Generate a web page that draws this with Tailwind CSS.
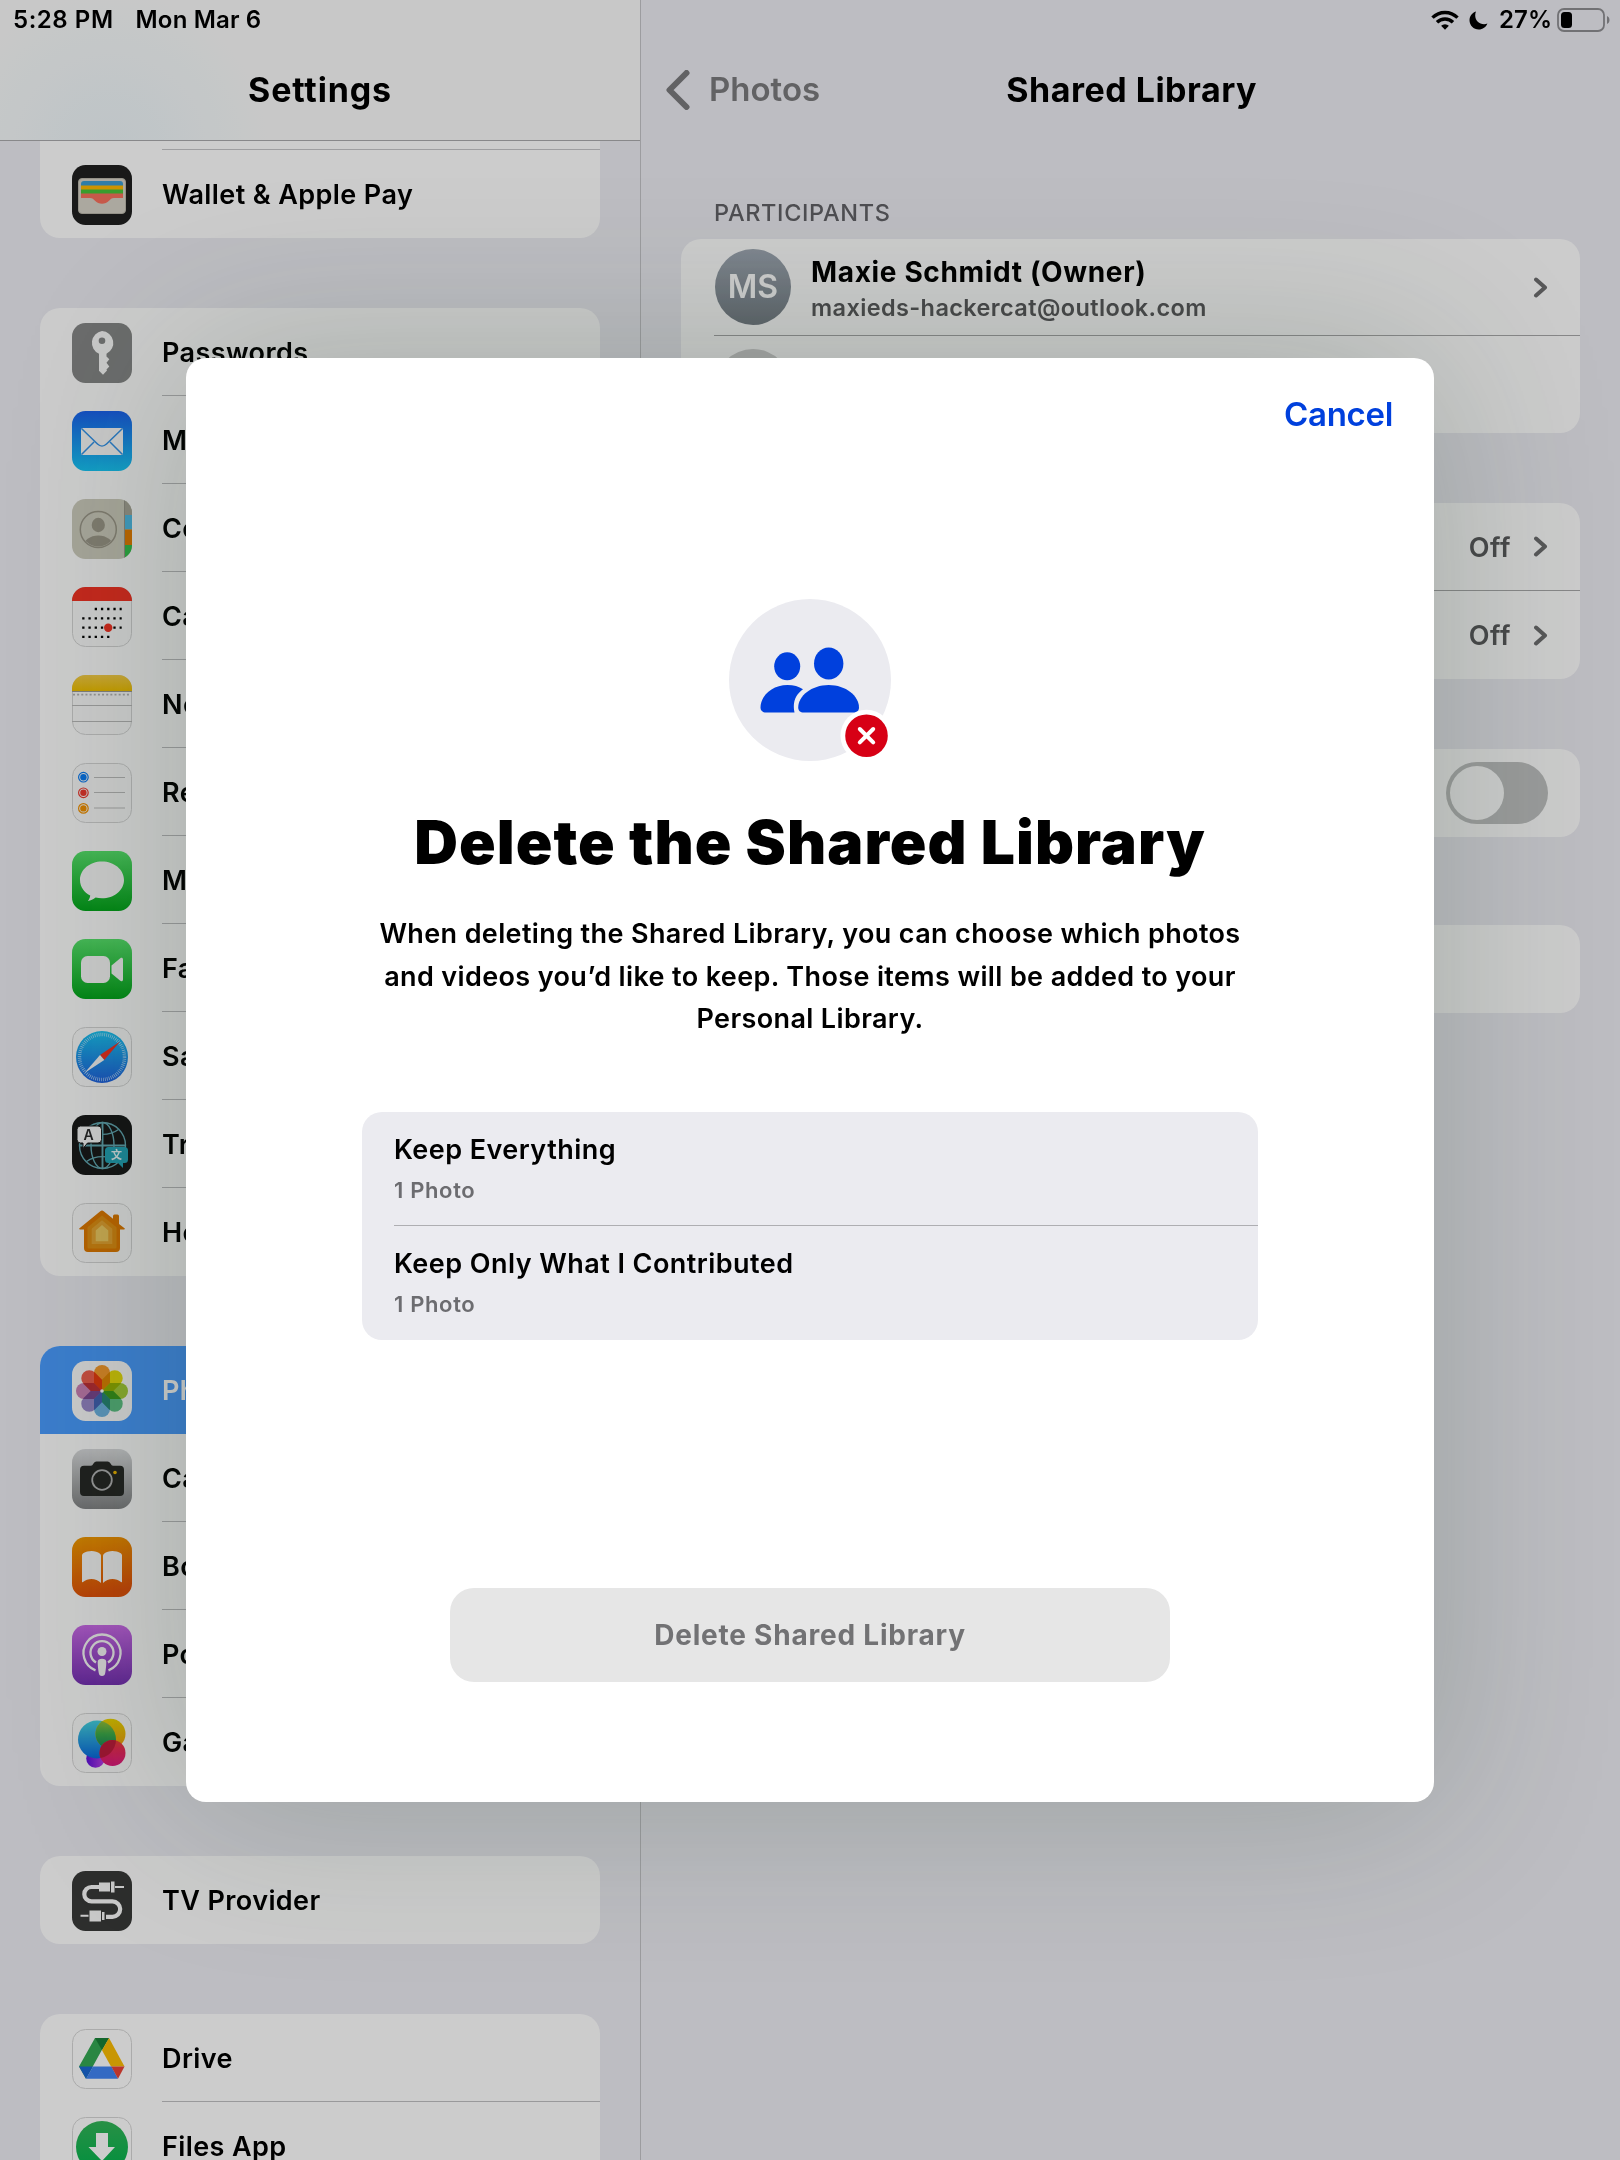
<!DOCTYPE html>
<html lang="en">
<head>
<meta charset="utf-8">
<title>Settings</title>
<script src="https://cdn.jsdelivr.net/npm/@tailwindcss/browser@4"></script>
</head>
<body class="m-0 w-[1620px] h-[2160px] overflow-hidden font-['Inter',sans-serif] text-black">
<div class="relative w-[1620px] h-[2160px] overflow-hidden flex bg-[#ededf3]">

  <!-- Sidebar -->
  <aside class="w-[640px] h-full shrink-0 flex flex-col overflow-hidden">
    <header class="h-[141px] shrink-0 border-b border-[#aaaaad] bg-[#fbfbfb] bg-[radial-gradient(circle_at_110px_150px,#edf6f9,#fbfbfb_170px)] flex flex-col">
      <div class="h-10 pl-[13px] pb-px flex items-center gap-[22px] text-[24px] font-semibold">
        <span class="tracking-[0.55px]">5:28 PM</span><span class="tracking-[0.15px]">Mon Mar 6</span>
      </div>
      <h1 class="h-[100px] text-center text-[34px] leading-[99px] font-bold tracking-[0.85px]">Settings</h1>
    </header>
    <div class="px-10 flex flex-col gap-[70px] text-[27px] font-semibold tracking-[0.4px]">

      <section class="bg-white rounded-b-[20px] overflow-hidden flex flex-col">
        <div class="h-[9px] ml-[122px] border-b border-[#c6c6c8]"></div>
        <div class="h-[88px] pl-8 flex gap-[30px]">
          <svg class="w-[60px] h-[60px] mt-[15px] shrink-0" viewBox="0 0 60 60"><rect width="60" height="60" rx="13.5" fill="#202020"/><rect x="6.5" y="13.5" width="47" height="35" rx="3.5" fill="#d6d3c7" stroke="#b9b6aa"/><path d="M9 19a3 3 0 0 1 3-3h36a3 3 0 0 1 3 3v2H9z" fill="#3b9dd2"/><path d="M9 20.500h42V25H9z" fill="#ffb800"/><path d="M9 24.500h42V29H9z" fill="#49c53a"/><path d="M9 28.500h42V33h-9c-2.500 0-3.500 1.200-5 2.800-3.500 3.800-10.500 3.800-14 0C21.500 34.200 20.500 33 18 33H9z" fill="#f8705d"/></svg>
          <div class="flex-1 pt-[3px] flex items-center">Wallet &amp; Apple Pay</div>
        </div>
      </section>

      <section class="bg-white rounded-[20px] overflow-hidden flex flex-col">
        <div class="h-[88px] pl-8 flex gap-[30px]">
          <svg class="w-[60px] h-[60px] mt-[15px] shrink-0" viewBox="0 0 60 60"><rect width="60" height="60" rx="13.5" fill="#868787"/><path fill-rule="evenodd" d="M30 8a12 12 0 0 1 4.500 22.800v2.700l2.800 2.800-2.800 3.500 2.800 3.600-2.800 3 .5 1-4 4.300-4-4V30.800A12 12 0 0 1 30 8zm0 6.500a3.300 3.300 0 1 0 0 6.600 3.300 3.300 0 0 0 0-6.600z" fill="#fafafa"/></svg>
          <div class="flex-1 pt-[3px] flex items-center border-b border-[#c0c0c2]">Passwords</div>
        </div>
        <div class="h-[88px] pl-8 flex gap-[30px]">
          <svg class="w-[60px] h-[60px] mt-[15px] shrink-0" viewBox="0 0 60 60"><defs><linearGradient id="mail" x2="0" y2="1"><stop stop-color="#1b62ee"/><stop offset="1" stop-color="#17c6f5"/></linearGradient></defs><rect width="60" height="60" rx="13.5" fill="url(#mail)"/><rect x="9" y="17" width="42" height="27" rx="1.5" fill="#fafafa"/><path d="M9.500 17.500l16 15.500c2.700 2.600 6.300 2.600 9 0l16-15.500M9.500 43.500L22 31M50.500 43.500L38 31" fill="none" stroke="#3494ea" stroke-width="1.5"/></svg>
          <div class="flex-1 pt-[3px] flex items-center border-b border-[#c0c0c2]">Mail</div>
        </div>
        <div class="h-[88px] pl-8 flex gap-[30px]">
          <svg class="w-[60px] h-[60px] mt-[15px] shrink-0" viewBox="0 0 60 60"><defs><clipPath id="tile"><rect width="60" height="60" rx="13.5"/></clipPath><clipPath id="face"><circle cx="26.3" cy="30.5" r="17"/></clipPath></defs><g clip-path="url(#tile)"><rect width="60" height="60" fill="#cfcdbf"/><path d="M53 0h7v16h-7z" fill="#a9a799"/><path d="M53 16h7v14.500h-7z" fill="#50bde8"/><path d="M53 30.500h7V46h-7z" fill="#e67e00"/><path d="M53 46h7v14h-7z" fill="#35c44d"/><path d="M52.500 0v60" stroke="#9a988c"/></g><g clip-path="url(#face)" fill="#9c9889"><ellipse cx="26.3" cy="26" rx="6.6" ry="7.2"/><ellipse cx="26.3" cy="48" rx="15" ry="11.5"/></g><circle cx="26.3" cy="30.5" r="18" fill="none" stroke="#9c9889" stroke-width="1.5"/></svg>
          <div class="flex-1 pt-[3px] flex items-center border-b border-[#c0c0c2]">Contacts</div>
        </div>
        <div class="h-[88px] pl-8 flex gap-[30px]">
          <svg class="w-[60px] h-[60px] mt-[15px] shrink-0" viewBox="0 0 60 60"><rect x=".5" y=".5" width="59" height="59" rx="13" fill="#fcfcfc" stroke="#d6d6d6"/><path d="M0 14v-.5A13.500 13.500 0 0 1 13.500 0h33A13.500 13.500 0 0 1 60 13.500v.5z" fill="#f43224"/><path d="M22.700 22h27M10.200 31.300h39.500M10.200 40.600h39.500M10.200 49.800h27.200" stroke="#000" stroke-width="2.3" stroke-dasharray="2.3 3.93"/><circle cx="36.2" cy="40.7" r="4.2" fill="#f43224"/></svg>
          <div class="flex-1 pt-[3px] flex items-center border-b border-[#c0c0c2]">Calendar</div>
        </div>
        <div class="h-[88px] pl-8 flex gap-[30px]">
          <svg class="w-[60px] h-[60px] mt-[15px] shrink-0" viewBox="0 0 60 60"><defs><linearGradient id="note" x2="0" y2="1"><stop stop-color="#f5cd48"/><stop offset="1" stop-color="#f2c100"/></linearGradient></defs><rect x=".5" y=".5" width="59" height="59" rx="13" fill="#fcfcfc" stroke="#d6d6d6"/><path d="M0 16v-2.500A13.500 13.500 0 0 1 13.500 0h33A13.500 13.500 0 0 1 60 13.500V16z" fill="url(#note)"/><path d="M0 16.500h60" stroke="#9d9c98" stroke-width="1.2"/><path d="M1 19.700h58" stroke="#b5b5b5" stroke-width="1.7" stroke-dasharray="2 2.15"/><path d="M0 30.500h60M0 46.500h60" stroke="#bbb"/></svg>
          <div class="flex-1 pt-[3px] flex items-center border-b border-[#c0c0c2]">Notes</div>
        </div>
        <div class="h-[88px] pl-8 flex gap-[30px]">
          <svg class="w-[60px] h-[60px] mt-[15px] shrink-0" viewBox="0 0 60 60"><rect x=".5" y=".5" width="59" height="59" rx="13" fill="#fcfcfc" stroke="#d6d6d6"/><g fill="#0a7cf5"><circle cx="11.4" cy="14.2" r="3.2"/><circle cx="11.4" cy="14.2" r="4.8" fill="none" stroke="#0a7cf5" stroke-width="1.2"/></g><g fill="#f03a30"><circle cx="11.4" cy="29.8" r="3.2"/><circle cx="11.4" cy="29.8" r="4.8" fill="none" stroke="#f03a30" stroke-width="1.2"/></g><g fill="#f59300"><circle cx="11.4" cy="45.4" r="3.2"/><circle cx="11.4" cy="45.4" r="4.8" fill="none" stroke="#f59300" stroke-width="1.2"/></g><path d="M22 14.500h31M22 29.500h31M22 45h31" stroke="#bebebe" stroke-width="1.2"/></svg>
          <div class="flex-1 pt-[3px] flex items-center border-b border-[#c0c0c2]">Reminders</div>
        </div>
        <div class="h-[88px] pl-8 flex gap-[30px]">
          <svg class="w-[60px] h-[60px] mt-[15px] shrink-0" viewBox="0 0 60 60"><defs><linearGradient id="grn" x2="0" y2="1"><stop stop-color="#57e36b"/><stop offset="1" stop-color="#04a71b"/></linearGradient></defs><rect width="60" height="60" rx="13.5" fill="url(#grn)"/><path d="M30 10.500c12.200 0 22 8.200 22 18.400s-9.800 18.400-22 18.400c-2.200 0-4.400-.3-6.400-.8-2.200 1.700-4.800 3.200-7.800 3.400 1.500-1.500 2.200-3.600 2.400-5.400C12 41.200 8 35.500 8 28.900 8 18.700 17.800 10.500 30 10.500z" fill="#fafafa"/></svg>
          <div class="flex-1 pt-[3px] flex items-center border-b border-[#c0c0c2]">Messages</div>
        </div>
        <div class="h-[88px] pl-8 flex gap-[30px]">
          <svg class="w-[60px] h-[60px] mt-[15px] shrink-0" viewBox="0 0 60 60"><rect width="60" height="60" rx="13.5" fill="url(#grn)"/><rect x="9" y="17" width="29" height="27" rx="6.5" fill="#fafafa"/><path d="M39.500 26.500l8.800-7.300c1.300-1 2.700-.3 2.700 1.300v20c0 1.600-1.400 2.300-2.700 1.300l-8.800-7.300z" fill="#fafafa"/></svg>
          <div class="flex-1 pt-[3px] flex items-center border-b border-[#c0c0c2]">FaceTime</div>
        </div>
        <div class="h-[88px] pl-8 flex gap-[30px]">
          <svg class="w-[60px] h-[60px] mt-[15px] shrink-0" viewBox="0 0 60 60"><defs><linearGradient id="saf" x2="0" y2="1"><stop stop-color="#1ac4f2"/><stop offset="1" stop-color="#1f62e0"/></linearGradient></defs><rect x=".5" y=".5" width="59" height="59" rx="13" fill="#fcfcfc" stroke="#d6d6d6"/><circle cx="30" cy="30" r="26" fill="url(#saf)"/><circle cx="30" cy="30" r="22.5" fill="none" stroke="#e3f4fd" stroke-opacity=".75" stroke-width="3.5" stroke-dasharray=".7 1.26"/><path d="M48 14.500L28 28l4.300 5z" fill="#f43224"/><path d="M12.500 46L28 28l4.300 5z" fill="#fafafa"/></svg>
          <div class="flex-1 pt-[3px] flex items-center border-b border-[#c0c0c2]">Safari</div>
        </div>
        <div class="h-[88px] pl-8 flex gap-[30px]">
          <svg class="w-[60px] h-[60px] mt-[15px] shrink-0" viewBox="0 0 60 60"><rect width="60" height="60" rx="13.5" fill="#191a1a"/><g fill="none" stroke="#64aab5" stroke-width="1.4"><circle cx="30.5" cy="30.5" r="23"/><ellipse cx="30.5" cy="30.5" rx="11.5" ry="23"/><path d="M30.500 7.500v46M7.500 30.500h46" stroke-width="1.9"/><path d="M14.500 14.500c9 6.500 23 6.500 32 0M14.500 46.500c9-6.500 23-6.500 32 0"/></g><path d="M8.500 11h17.500a3.500 3.500 0 0 1 3.500 3.500v10a3.500 3.500 0 0 1-3.500 3.500H15.500L11 33.500V28H8.500A3.500 3.500 0 0 1 5 24.500v-10A3.500 3.500 0 0 1 8.500 11z" fill="#fafafa" stroke="#191a1a"/><path d="M36.500 32h16a3.500 3.500 0 0 1 3.500 3.500v9a3.500 3.500 0 0 1-3.500 3.500h-1.500v5l-5-5h-9.500a3.500 3.500 0 0 1-3.500-3.500v-9a3.500 3.500 0 0 1 3.500-3.500z" fill="#23a5b8"/><text x="16.7" y="24.6" text-anchor="middle" font-size="14" font-weight="600" letter-spacing="0" fill="#2b2b2b">A</text><text x="44.5" y="44.2" text-anchor="middle" font-size="11" font-weight="700" letter-spacing="0" fill="#e8f7f8" font-family="Noto Sans CJK SC, sans-serif">文</text></svg>
          <div class="flex-1 pt-[3px] flex items-center border-b border-[#c0c0c2]">Translate</div>
        </div>
        <div class="h-[88px] pl-8 flex gap-[30px]">
          <svg class="w-[60px] h-[60px] mt-[15px] shrink-0" viewBox="0 0 60 60"><rect x=".5" y=".5" width="59" height="59" rx="13" fill="#fcfcfc" stroke="#d6d6d6"/><path d="M28.300 8.300a2.700 2.700 0 0 1 3.400 0l9.300 7.500V13a1.500 1.500 0 0 1 1.500-1.500h3A1.500 1.500 0 0 1 47 13v8l5.500 4.300c.8.700.3 1.200-.5 1.200h-4V45a4 4 0 0 1-4 4H16a4 4 0 0 1-4-4V26.500H8c-.8 0-1.300-.5-.5-1.200z" fill="#e07a00"/><path d="M30 12.500l14.500 11.800V44a1.500 1.500 0 0 1-1.500 1.500H17a1.500 1.500 0 0 1-1.500-1.500V24.300z" fill="#e29013"/><path d="M30 17.200l10.300 8.600V41h-20.600V25.800z" fill="#e6a632"/><path d="M30 22l6.300 5.500v10.700H23.700V27.500z" fill="#efcb62"/></svg>
          <div class="flex-1 pt-[3px] flex items-center">Home</div>
        </div>
      </section>

      <section class="bg-white rounded-[20px] overflow-hidden flex flex-col">
        <div class="h-[88px] pl-8 flex gap-[30px] bg-[#4a9dff] text-white">
          <svg class="w-[60px] h-[60px] mt-[15px] shrink-0" viewBox="0 0 60 60"><rect width="60" height="60" rx="13.5" fill="#fcfcfc"/><path class="mix-blend-multiply" d="M22 12a8 8 0 0 1 16 0v10l-8 8-8-8z" fill="#fa9d2d"/><path class="mix-blend-multiply" d="M22 12a8 8 0 0 1 16 0v10l-8 8-8-8z" fill="#eae00c" transform="rotate(45 30 30)"/><path class="mix-blend-multiply" d="M22 12a8 8 0 0 1 16 0v10l-8 8-8-8z" fill="#a7d03a" transform="rotate(90 30 30)"/><path class="mix-blend-multiply" d="M22 12a8 8 0 0 1 16 0v10l-8 8-8-8z" fill="#5ec486" transform="rotate(135 30 30)"/><path class="mix-blend-multiply" d="M22 12a8 8 0 0 1 16 0v10l-8 8-8-8z" fill="#6fb7e6" transform="rotate(180 30 30)"/><path class="mix-blend-multiply" d="M22 12a8 8 0 0 1 16 0v10l-8 8-8-8z" fill="#9c8cce" transform="rotate(225 30 30)"/><path class="mix-blend-multiply" d="M22 12a8 8 0 0 1 16 0v10l-8 8-8-8z" fill="#cf84b8" transform="rotate(270 30 30)"/><path class="mix-blend-multiply" d="M22 12a8 8 0 0 1 16 0v10l-8 8-8-8z" fill="#f2604e" transform="rotate(315 30 30)"/><circle cx="30" cy="30" r="1.8" fill="#fff"/></svg>
          <div class="flex-1 pt-[3px] flex items-center">Photos</div>
        </div>
        <div class="h-[88px] pl-8 flex gap-[30px]">
          <svg class="w-[60px] h-[60px] mt-[15px] shrink-0" viewBox="0 0 60 60"><defs><linearGradient id="cam" x2="0" y2="1"><stop stop-color="#dadbdd"/><stop offset="1" stop-color="#838486"/></linearGradient></defs><rect width="60" height="60" rx="13.5" fill="url(#cam)"/><path d="M12 16.800h7c2 0 2.500-4.300 5.500-4.300h11c3 0 3.500 4.300 5.500 4.300h7a4 4 0 0 1 4 4V43a4 4 0 0 1-4 4H12a4 4 0 0 1-4-4V20.800a4 4 0 0 1 4-4z" fill="#272926"/><circle cx="30" cy="31" r="9.8" fill="none" stroke="#b5b5b6" stroke-width="1.8"/><circle cx="43" cy="23.5" r="1.8" fill="#eeb400"/></svg>
          <div class="flex-1 pt-[3px] flex items-center border-b border-[#c0c0c2]">Camera</div>
        </div>
        <div class="h-[88px] pl-8 flex gap-[30px]">
          <svg class="w-[60px] h-[60px] mt-[15px] shrink-0" viewBox="0 0 60 60"><defs><linearGradient id="book" x2=".2" y2="1"><stop stop-color="#f39c00"/><stop offset="1" stop-color="#e35209"/></linearGradient></defs><rect width="60" height="60" rx="13.5" fill="url(#book)"/><path d="M10 18.500c0-1 .4-1.700 1.200-2.200 5-3.200 12.500-3.200 16.800.4.700.6 1 1.200 1 2.100V46c-5-5.200-13-5.200-18-1-.6.500-1 .3-1-.5zM50 18.500c0-1-.4-1.700-1.200-2.200-5-3.200-12.500-3.200-16.800.4-.7.600-1 1.200-1 2.100V46c5-5.200 13-5.200 18-1 .6.500 1 .3 1-.5z" fill="#fafafa"/></svg>
          <div class="flex-1 pt-[3px] flex items-center border-b border-[#c0c0c2]">Books</div>
        </div>
        <div class="h-[88px] pl-8 flex gap-[30px]">
          <svg class="w-[60px] h-[60px] mt-[15px] shrink-0" viewBox="0 0 60 60"><defs><linearGradient id="pod" x2="0" y2="1"><stop stop-color="#ca69e8"/><stop offset="1" stop-color="#7630b4"/></linearGradient></defs><rect width="60" height="60" rx="13.5" fill="url(#pod)"/><g fill="none" stroke="#fafafa" stroke-width="2.3"><path d="M23.500 45.300a18.500 18.500 0 1 1 13 0"/><path d="M24 37.500a11.500 11.500 0 1 1 12 0"/></g><circle cx="30" cy="26.5" r="4.5" fill="#fafafa"/><path d="M25.700 37c0-2.200 1.800-3.200 4.300-3.200s4.300 1 4.300 3.200c0 3.500-.5 7.500-1 10.800-.3 2.200-1.400 3.200-3.300 3.200s-3-1-3.300-3.200c-.5-3.300-1-7.300-1-10.800z" fill="#fafafa"/></svg>
          <div class="flex-1 pt-[3px] flex items-center border-b border-[#c0c0c2]">Podcasts</div>
        </div>
        <div class="h-[88px] pl-8 flex gap-[30px]">
          <svg class="w-[60px] h-[60px] mt-[15px] shrink-0" viewBox="0 0 60 60"><defs><linearGradient id="g1" x2="0" y2="1"><stop stop-color="#46d4e0"/><stop offset="1" stop-color="#0a6ae0"/></linearGradient><linearGradient id="g2" x2="0" y2="1"><stop stop-color="#ecd500"/><stop offset="1" stop-color="#ef9a12"/></linearGradient><linearGradient id="g3" x2="0" y2="1"><stop stop-color="#ea4030"/><stop offset=".35" stop-color="#ea2a55"/><stop offset="1" stop-color="#e01880"/></linearGradient><linearGradient id="g4"><stop stop-color="#6010e0"/><stop offset="1" stop-color="#c040e8"/></linearGradient><linearGradient id="g5" x2="0" y2="1"><stop stop-color="#a6c436"/><stop offset=".5" stop-color="#3fae4a"/><stop offset="1" stop-color="#13885a"/></linearGradient><clipPath id="ball"><circle cx="25" cy="26.5" r="19"/></clipPath></defs><rect x=".5" y=".5" width="59" height="59" rx="13" fill="#fcfcfc" stroke="#d6d6d6"/><circle cx="23.5" cy="45.5" r="9.3" fill="url(#g4)"/><circle cx="25" cy="26.5" r="19" fill="url(#g1)"/><circle cx="38.5" cy="20.8" r="15" fill="url(#g2)"/><circle cx="38.5" cy="20.8" r="15" fill="url(#g5)" clip-path="url(#ball)"/><circle cx="40.5" cy="40" r="13" fill="url(#g3)"/><circle cx="40.5" cy="40" r="13" fill="#c01c3c" clip-path="url(#ball)"/></svg>
          <div class="flex-1 pt-[3px] flex items-center">Game Center</div>
        </div>
      </section>

      <section class="bg-white rounded-[20px] overflow-hidden flex flex-col">
        <div class="h-[88px] pl-8 flex gap-[30px]">
          <svg class="w-[60px] h-[60px] mt-[15px] shrink-0" viewBox="0 0 60 60"><rect width="60" height="60" rx="13.5" fill="#393a39"/><path d="M27 16h-7.500a7.200 7.200 0 0 0 0 14.400h21a7.700 7.700 0 0 1 0 15.400H34" fill="none" stroke="#fafafa" stroke-width="4.2"/><path d="M27 11.500h11v9H27zM39 10.500h3.500v11H39zM43 15h9v2h-9zM17.500 39.500H29v11H17.500zM30 41h2.500v8H30zM8.500 43.700h8v2h-8z" fill="#fafafa"/></svg>
          <div class="flex-1 pt-[3px] flex items-center">TV Provider</div>
        </div>
      </section>

      <section class="bg-white rounded-[20px] overflow-hidden flex flex-col">
        <div class="h-[88px] pl-8 flex gap-[30px]">
          <svg class="w-[60px] h-[60px] mt-[15px] shrink-0" viewBox="0 0 60 60"><rect x=".5" y=".5" width="59" height="59" rx="13" fill="#fff" stroke="#d6d6d6"/><path d="M23 9h14l-7.300 12.200L14 49.800 7 37.500z" fill="#34a853"/><path d="M23 9h14l-7 12.200z" fill="#188038"/><path d="M37 9l15.500 28.500H39L30 21.200z" fill="#fbbc04"/><path d="M7 37.500h14L14 49.800z" fill="#1967d2"/><path d="M21 37.500h18.500L46 49.800H14z" fill="#4285f4"/><path d="M39.300 37.500h13.200L46 49.800z" fill="#ea4335"/></svg>
          <div class="flex-1 pt-[3px] flex items-center border-b border-[#c0c0c2]">Drive</div>
        </div>
        <div class="h-[88px] pl-8 flex gap-[30px]">
          <svg class="w-[60px] h-[60px] mt-[15px] shrink-0" viewBox="0 0 60 60"><defs><linearGradient id="fil" x2="0" y2="1"><stop stop-color="#33b558"/><stop offset="1" stop-color="#00b34d"/></linearGradient></defs><rect x=".5" y=".5" width="59" height="59" rx="13" fill="#fff" stroke="#d6d6d6"/><circle cx="30" cy="30" r="26" fill="url(#fil)"/><path d="M24 16h12v14h7L30 44 16.500 30H24z" fill="#fff"/></svg>
          <div class="flex-1 pt-[3px] flex items-center">Files App</div>
        </div>
      </section>
    </div>
  </aside>

  <!-- Detail pane -->
  <main class="flex-1 h-full flex flex-col border-l border-[#c3c3c7]">
    <div class="h-10 pr-[10px] flex items-center justify-end text-[24px] font-semibold">
      <svg class="w-7 h-5" viewBox="0 0 28 20"><g fill="none" stroke="#000" stroke-width="3.4"><path d="M1.500 7.600a17.700 17.700 0 0 1 25 0"/><path d="M6 12.300a11.300 11.300 0 0 1 16 0"/></g><path d="M14 19.800l-3.900-4a5.500 5.500 0 0 1 7.800 0z"/></svg>
      <svg class="w-[19px] h-[19px] ml-2.5 mr-[11px]" viewBox="0 0 19 19"><path d="M7 .5C3.200 1.600.5 5 .5 9.200c0 5.100 4.100 9.300 9.200 9.300 4 0 7.400-2.500 8.700-6-1 .5-2.100.7-3.300.7C10.200 13.200 6.200 9.300 6.200 4.400c0-1.400.3-2.700.8-3.900z"/></svg>
      <span class="pb-px">27%</span>
      <svg class="w-[53px] h-6 ml-[5px]" viewBox="0 0 53 24"><rect x="1" y="1" width="46" height="22" rx="6" fill="none" stroke="#8e8e92" stroke-width="1.8"/><rect x="4" y="4" width="11" height="16" rx="3.5"/><path d="M50 8c3.300 1.300 3.300 6.700 0 8z" fill="#8e8e92"/></svg>
    </div>
    <div class="h-[100px] pl-[23px] pr-[363px] flex items-center justify-between">
      <div class="flex items-center gap-[18px] text-[33px] font-medium text-[#7b7b7d]">
        <svg class="w-[27px] h-10" viewBox="0 0 27 40"><path d="M22.500 3L5.500 20l17 17" fill="none" stroke="#7b7b7d" stroke-width="6" stroke-linecap="round" stroke-linejoin="round"/></svg>
        <span class="pb-px font-semibold">Photos</span>
      </div>
      <h2 class="pb-px text-[34px] font-bold tracking-[0.5px]">Shared Library</h2>
    </div>
    <div class="h-[99px] pl-[73px] pt-[56px] text-[23.5px] leading-[33px] font-medium tracking-[0.65px] text-[#626267]">PARTICIPANTS</div>
    <div class="pl-10 pr-10 flex flex-col gap-[70px] text-[27px] font-semibold">
      <section class="h-[194px] bg-white rounded-[20px] overflow-hidden flex flex-col">
        <div class="h-[97px] ml-[33px] pl-px pr-8 flex items-center border-b border-[#a9a9ab]">
          <div class="w-[76px] h-[76px] rounded-full bg-linear-to-b from-[#a0a9b4] to-[#767e86] flex items-center justify-center text-white text-[32px] font-semibold">MS</div>
          <div class="ml-5 pt-[5px] flex-1 flex flex-col">
            <div class="text-[28px] leading-9 font-bold tracking-[0.65px]">Maxie Schmidt (Owner)</div>
            <div class="text-[23.5px] leading-9 font-semibold tracking-[0.38px] text-[#5b5b5d]">maxieds-hackercat@outlook.com</div>
          </div>
          <svg class="w-[15px] h-[21px]" viewBox="0 0 15 21"><path d="M3 2.500l9 8-9 8" fill="none" stroke="#6e6e70" stroke-width="4" stroke-linecap="round" stroke-linejoin="round"/></svg>
        </div>
        <div class="ml-[34px] pt-[13px]"><div class="w-[76px] h-[76px] rounded-full bg-[#d0d0d0]"></div></div>
      </section>
      <section class="bg-white rounded-[20px] overflow-hidden flex flex-col">
        <div class="h-[88px] pr-8 flex items-center justify-end gap-[22px] border-b border-[#a9a9ab]">
          <span class="text-[#5b5b5d] pt-[3px] tracking-[0.5px]">Off</span>
          <svg class="w-[15px] h-[21px]" viewBox="0 0 15 21"><path d="M3 2.500l9 8-9 8" fill="none" stroke="#6e6e70" stroke-width="4" stroke-linecap="round" stroke-linejoin="round"/></svg>
        </div>
        <div class="h-[88px] pr-8 flex items-center justify-end gap-[22px]">
          <span class="text-[#5b5b5d] pt-[3px] tracking-[0.5px]">Off</span>
          <svg class="w-[15px] h-[21px]" viewBox="0 0 15 21"><path d="M3 2.500l9 8-9 8" fill="none" stroke="#6e6e70" stroke-width="4" stroke-linecap="round" stroke-linejoin="round"/></svg>
        </div>
      </section>
      <section class="h-[88px] bg-white rounded-[20px] pr-8 flex items-center justify-end">
        <div class="w-[102px] h-[62px] rounded-full bg-[#c1c2c2] p-1"><div class="w-[54px] h-[54px] rounded-full bg-white"></div></div>
      </section>
      <section class="mt-[18px] h-[88px] bg-white rounded-[20px]"></section>
    </div>
  </main>

  <!-- Dimmed backdrop -->
  <div class="absolute inset-0 bg-black/20"></div>

  <!-- Dialog -->
  <div role="dialog" class="absolute left-[186px] top-[358px] w-[1248px] h-[1444px] bg-white rounded-[20px] shadow-[0_0_180px_0_rgba(30,60,40,0.23)] flex flex-col items-center">
    <div class="h-[241px] w-full pt-[33px] pr-[41px] text-right text-[33px] leading-[46px] font-semibold tracking-[-0.3px] text-[#0040dd]">Cancel</div>
    <svg class="w-[162px] h-[162px] overflow-visible" viewBox="0 0 162 162"><circle cx="81" cy="81" r="81" fill="#ebebf0"/><g fill="#0040dd"><ellipse cx="58.2" cy="67.3" rx="13" ry="14"/><ellipse cx="99.7" cy="64.5" rx="14.7" ry="16"/><path d="M31.500 108.500C31.500 97 43 86 58.500 86c6 0 11.500 1.500 15.500 4.200-6.500 4.500-11 12.300-8.500 23.300H37c-3.500 0-5.500-2-5.500-5z"/><path d="M69.200 108.500C69.200 97 82.500 86 99.700 86s30.300 11 30.300 22.500c0 3-2 5-5.500 5H74.700c-3.500 0-5.500-2-5.500-5z"/></g><circle cx="137.5" cy="136.7" r="26" fill="#fff"/><circle cx="137.5" cy="136.700" r="21.3" fill="#d70015"/><path d="M130.800 130l13.400 13.400M144.200 130l-13.400 13.400" stroke="#fff" stroke-width="4" stroke-linecap="round"/></svg>
    <h2 class="mt-[39px] text-[60.5px] leading-[84px] font-black tracking-[1.05px] text-center whitespace-nowrap">Delete the Shared Library</h2>
    <p class="mt-[29px] text-[27px] leading-[42.6px] font-semibold tracking-[0.37px] text-center whitespace-nowrap">When deleting the Shared Library, you can choose which photos<br>and videos you’d like to keep. Those items will be added to your<br>Personal Library.</p>
    <div class="mt-[71px] w-[896px] h-[228px] bg-[#ebebf0] rounded-[20px] flex flex-col pl-8">
      <div class="h-[114px] pt-5 flex flex-col border-b border-[#aeaeb2]">
        <span class="text-[27px] leading-9 font-semibold tracking-[0.45px]">Keep Everything</span>
        <span class="mt-1 text-[22px] leading-9 font-semibold tracking-[0.65px] text-[#6c6c70]">1 Photo</span>
      </div>
      <div class="h-[114px] pt-5 flex flex-col">
        <span class="text-[27px] leading-9 font-semibold tracking-[0.45px]">Keep Only What I Contributed</span>
        <span class="mt-1 text-[22px] leading-9 font-semibold tracking-[0.65px] text-[#6c6c70]">1 Photo</span>
      </div>
    </div>
    <div class="mt-[248px] w-[720px] h-[94px] rounded-[24px] bg-[#e6e6e6] flex items-center justify-center text-[28px] font-bold tracking-[0.78px] text-[#727274]">Delete Shared Library</div>
  </div>
</div>
</body>
</html>
